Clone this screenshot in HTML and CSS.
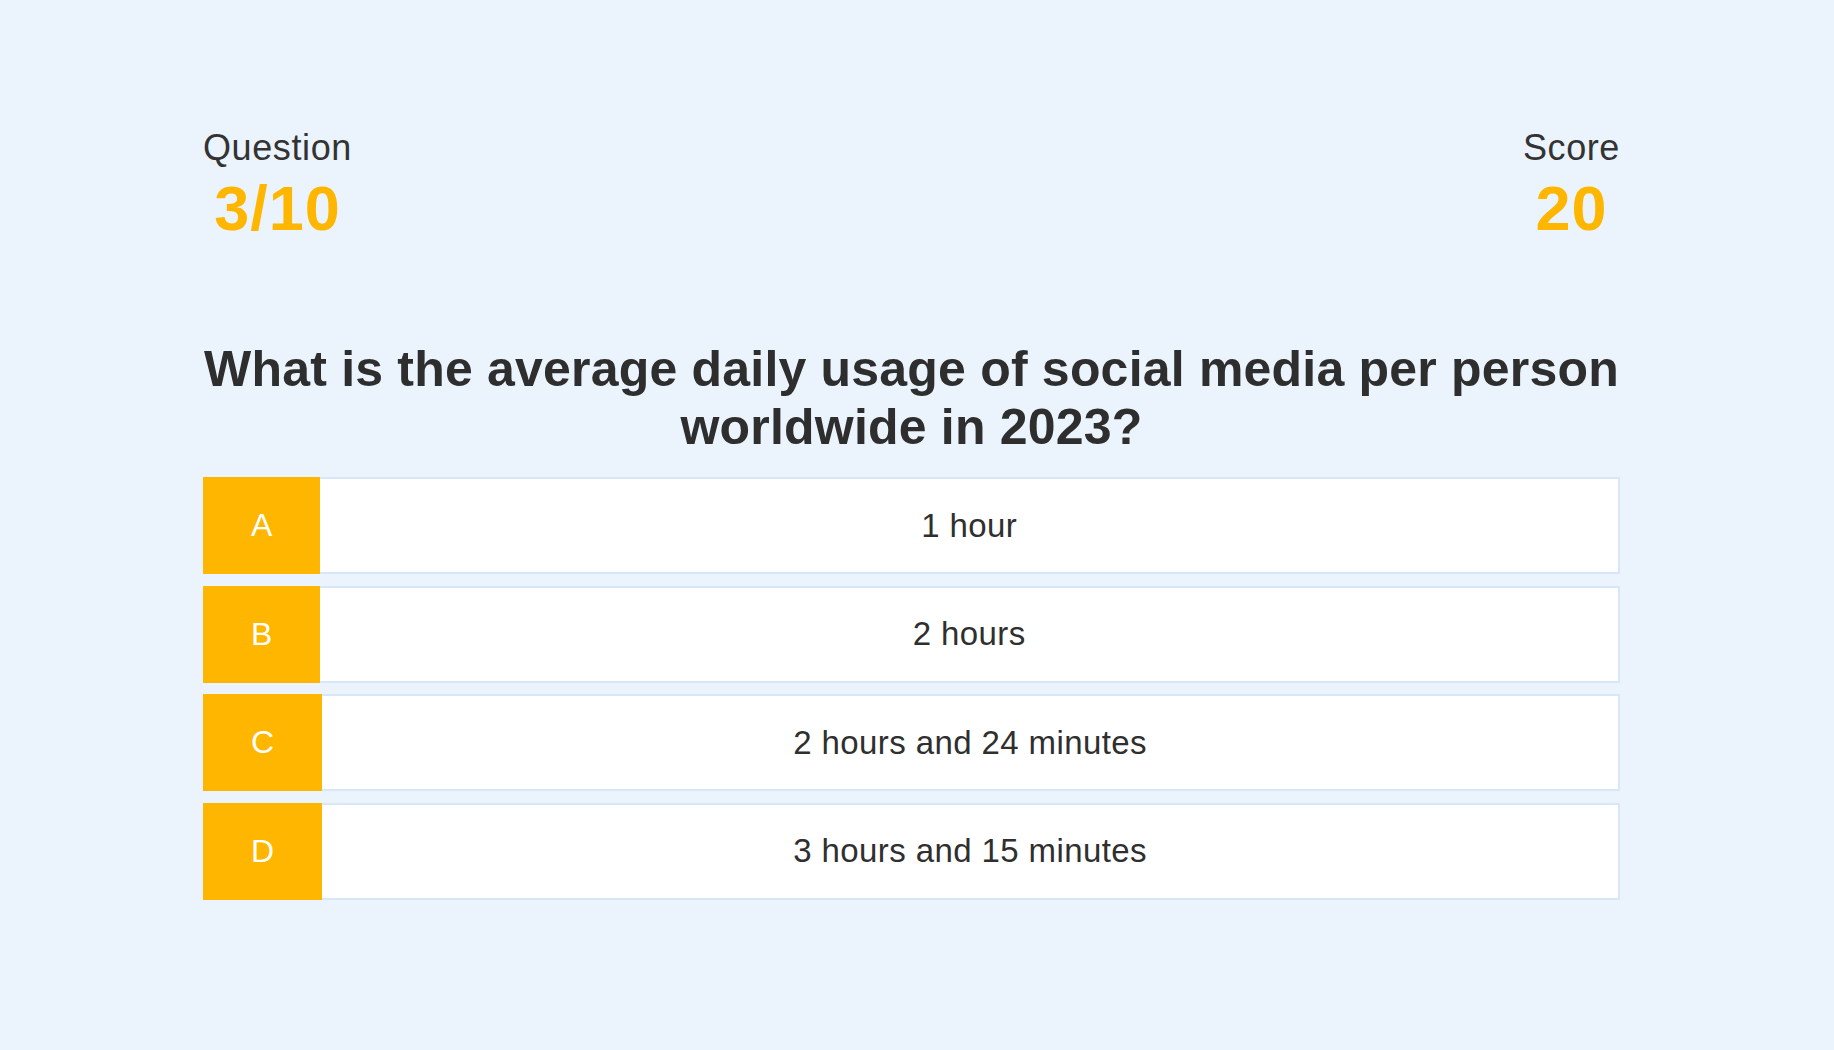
FILE: index.html
```html
<!DOCTYPE html>
<html lang="en">
<head>
<meta charset="utf-8">
<title>Quiz</title>
<link rel="stylesheet" href="styles.css">
</head>
<body>
<div class="page">
  <main class="quiz">
    <header class="stats">
      <div class="stat">
        <div class="stat-label">Question</div>
        <div class="stat-value">3/10</div>
      </div>
      <div class="stat">
        <div class="stat-label">Score</div>
        <div class="stat-value">20</div>
      </div>
    </header>
    <h1 class="question">What is the average daily usage of social media per person worldwide in 2023?</h1>
    <ul class="options">
      <li class="option"><span class="option-letter">A</span><span class="option-text">1 hour</span></li>
      <li class="option"><span class="option-letter">B</span><span class="option-text">2 hours</span></li>
      <li class="option"><span class="option-letter">C</span><span class="option-text">2 hours and 24 minutes</span></li>
      <li class="option"><span class="option-letter">D</span><span class="option-text">3 hours and 15 minutes</span></li>
    </ul>
  </main>
</div>
</body>
</html>
```
FILE: styles.css
```css
html, body {
  margin: 0;
  padding: 0;
  background: #ebf4fd;
  font-family: "Liberation Sans", Arial, Helvetica, sans-serif;
  color: #333333;
}

.page {
  padding-right: 11px;
  padding-top: 127px;
}

.quiz {
  width: 1417px;
  margin: 0 auto;
}

.stats {
  display: flex;
  justify-content: space-between;
  align-items: flex-start;
}

.stat {
  text-align: center;
}

.stat-label {
  font-size: 36px;
  line-height: 41px;
  letter-spacing: 0.6px;
  color: #333333;
}

.stat-value {
  padding-top: 4px;
  font-size: 63px;
  line-height: 72px;
  letter-spacing: 1px;
  font-weight: bold;
  color: #ffb600;
}

.question {
  margin: 96px 0 21px;
  font-size: 50px;
  line-height: 58px;
  letter-spacing: 0.2px;
  font-weight: bold;
  text-align: center;
  color: #2e2e2e;
}

.options {
  list-style: none;
  margin: 0;
  padding: 0;
  display: flex;
  flex-direction: column;
  gap: 11.5px;
}

.option {
  display: flex;
  align-items: stretch;
}

.option-letter {
  display: flex;
  align-items: center;
  justify-content: center;
  padding: 0 48px;
  background: #ffb600;
  color: #ffffff;
  font-size: 32px;
}

.option-text {
  flex: 1;
  background: #ffffff;
  border: 2px solid #d8e7f7;
  border-left: none;
  padding: 27.5px 0;
  line-height: 38px;
  font-size: 33px;
  letter-spacing: 0.4px;
  text-align: center;
  color: #2f2f2f;
}
```
